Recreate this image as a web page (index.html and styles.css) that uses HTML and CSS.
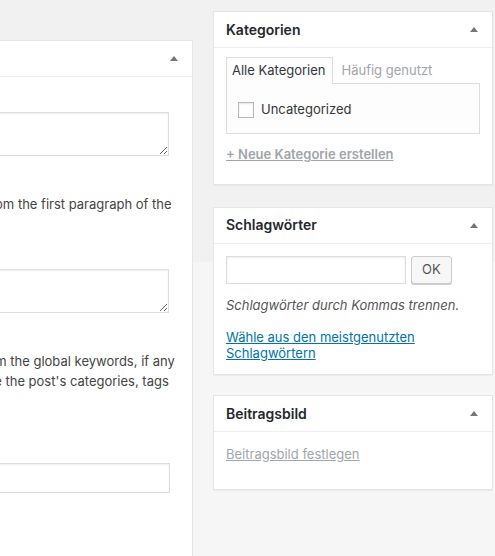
FILE: index.html
```html
<!DOCTYPE html>
<html lang="de">
<head>
<meta charset="utf-8">
<title>Beitrag bearbeiten</title>
<link rel="stylesheet" href="styles.css">
</head>
<body>
<div class="wrap">
  <div class="main">
    <div class="postbox left-box">
      <div class="hndle">
        <span class="toggle"><svg width="8" height="5" viewBox="0 0 8 5"><polygon points="4,0 8,5 0,5" fill="#72777c"/></svg></span>
      </div>
      <div class="left-inside">
        <textarea class="field ta ta1"></textarea>
        <p class="desc d1"><span class="ln l1">If left empty, it is generated from the first paragraph of the</span><span class="ln">post.</span></p>
        <textarea class="field ta ta2"></textarea>
        <p class="desc d2"><span class="ln l2">If empty, keywords are taken from the global keywords, if any</span><span class="ln l3">are set. Additionally, we use the post's categories, tags</span><span class="ln">and excerpt.</span></p>
        <input class="field line" type="text">
      </div>
    </div>
  </div>
  <div class="side">
    <div class="postbox cat-box">
      <div class="hndle">
        <h2 class="title">Kategorien</h2>
        <span class="toggle"><svg width="8" height="5" viewBox="0 0 8 5"><polygon points="4,0 8,5 0,5" fill="#72777c"/></svg></span>
      </div>
      <div class="inside cat-inside">
        <ul class="tabs">
          <li class="tab active">Alle Kategorien</li>
          <li class="tab">Häufig genutzt</li>
        </ul>
        <div class="panel">
          <label class="check-row"><input class="check" type="checkbox"><span>Uncategorized</span></label>
        </div>
        <a class="muted-link bold" href="#">+ Neue Kategorie erstellen</a>
      </div>
    </div>
    <div class="postbox tag-box">
      <div class="hndle">
        <h2 class="title">Schlagwörter</h2>
        <span class="toggle"><svg width="8" height="5" viewBox="0 0 8 5"><polygon points="4,0 8,5 0,5" fill="#72777c"/></svg></span>
      </div>
      <div class="inside tag-inside">
        <div class="tag-form">
          <input class="field tag-input" type="text">
          <button class="button" type="button">OK</button>
        </div>
        <p class="howto">Schlagwörter durch Kommas trennen.</p>
        <a class="blue-link" href="#">Wähle aus den meistgenutzten<br>Schlagwörtern</a>
      </div>
    </div>
    <div class="postbox img-box">
      <div class="hndle">
        <h2 class="title">Beitragsbild</h2>
        <span class="toggle"><svg width="8" height="5" viewBox="0 0 8 5"><polygon points="4,0 8,5 0,5" fill="#72777c"/></svg></span>
      </div>
      <div class="inside img-inside">
        <a class="muted-link" href="#">Beitragsbild festlegen</a>
      </div>
    </div>
  </div>
</div>
</body>
</html>
```
FILE: styles.css
```css
html, body {
  margin: 0;
  padding: 0;
}
body {
  width: 495px;
  height: 556px;
  overflow: hidden;
  background: linear-gradient(#f1f1f1 0, #f1f1f1 262px, #f6f6f6 262px);
  font-family: Inter, Roboto, "Liberation Sans", sans-serif;
  font-size: 13px;
  line-height: 19.5px;
  color: #444;
}
.wrap {
  display: flex;
  align-items: flex-start;
  padding-top: 11px;
}
.main {
  flex: 0 0 420px;
  width: 420px;
  margin-left: -227px;
  margin-top: 29px;
}
.side {
  flex: 0 0 280px;
  width: 280px;
  margin-left: 20px;
}
.postbox {
  box-sizing: border-box;
  background: #fff;
  border: 1px solid #e5e5e5;
  box-shadow: 0 1px 1px rgba(0,0,0,.04);
}
.left-box {
  height: 540px;
}
.cat-box { margin-bottom: 22px; }
.tag-box { margin-bottom: 20px; }
.hndle {
  height: 35px;
  border-bottom: 1px solid #eee;
  display: flex;
  align-items: center;
  padding-left: 12px;
}
.title {
  margin: 0;
  flex: 1;
  font-size: 14px;
  font-weight: 600;
  line-height: 20px;
  color: #23282d;
}
.toggle {
  margin-left: auto;
  width: 36px;
  height: 35px;
  display: flex;
  align-items: center;
  justify-content: center;
}
.toggle svg { display: block; }

/* left box */
.left-inside {
  padding: 35px 23px 0 12px;
}
.field {
  box-sizing: border-box;
  display: block;
  width: 100%;
  margin: 0;
  border: 1px solid #ddd;
  background: #fff;
  box-shadow: inset 0 1px 2px rgba(0,0,0,.07);
  font: inherit;
  color: #32373c;
  border-radius: 0;
  outline: none;
}
.ta {
  height: 44px;
  resize: vertical;
}
.desc {
  margin: 0;
  white-space: nowrap;
}
.ln { display: block; }
.l1 { margin-left: 28px; }
.l2 { margin-left: 11px; }
.l3 { margin-left: 44px; }
.d1 { margin-top: 39px; }
.ta2 { margin-top: 35px; }
.d2 { margin-top: 39px; }
.line {
  margin-top: 52px;
  height: 30px;
  width: calc(100% + 1px);
}

/* categories */
.inside {
  padding: 0 12px;
}
.cat-inside {
  padding-top: 9px;
  padding-bottom: 19px;
}
.tabs {
  list-style: none;
  margin: 0;
  padding: 0;
  display: flex;
}
.tab {
  padding: 3px 5px 3px;
  line-height: 19px;
  color: #a0a5aa;
  border: 1px solid transparent;
  border-bottom: 0;
  margin-left: 3px;
}
.tab.active {
  margin-left: 0;
  padding: 3px 6px 4px 5px;
  color: #32373c;
  background: #fdfdfd;
  border-color: #ddd;
  position: relative;
  z-index: 1;
  margin-bottom: -1px;
}
.panel {
  border: 1px solid #ddd;
  background: #fdfdfd;
  padding: 16px 11px 13px 11px;
}
.check-row {
  display: flex;
  align-items: center;
  height: 20px;
  color: #32373c;
}
.check {
  -webkit-appearance: none;
  appearance: none;
  box-sizing: border-box;
  width: 16px;
  height: 16px;
  margin: 0 7px 0 0;
  border: 1px solid #b4b9be;
  background: #fff;
  box-shadow: inset 0 1px 2px rgba(0,0,0,.1);
}
.muted-link {
  display: inline-block;
  color: #a0a5aa;
  text-decoration: underline;
}
.muted-link.bold {
  font-weight: 600;
  margin-top: 11px;
}

/* tags */
.tag-inside {
  padding-top: 12px;
  padding-bottom: 13px;
}
.tag-form {
  display: flex;
  gap: 5px;
}
.tag-input {
  width: 180px;
  height: 28px;
}
.button {
  box-sizing: border-box;
  height: 28px;
  padding: 0 10px;
  border: 1px solid #ccc;
  border-radius: 3px;
  background: #f7f7f7;
  box-shadow: 0 1px 0 #ccc;
  color: #555;
  font: inherit;
  font-size: 13px;
}
.howto {
  margin: 12px 0 0;
  font-style: italic;
  color: #555;
}
.blue-link {
  display: block;
  margin-top: 15px;
  line-height: 15.5px;
  color: #0073aa;
  text-decoration: underline;
}

/* featured image */
.img-inside {
  padding-top: 13px;
  padding-bottom: 24px;
}
```
